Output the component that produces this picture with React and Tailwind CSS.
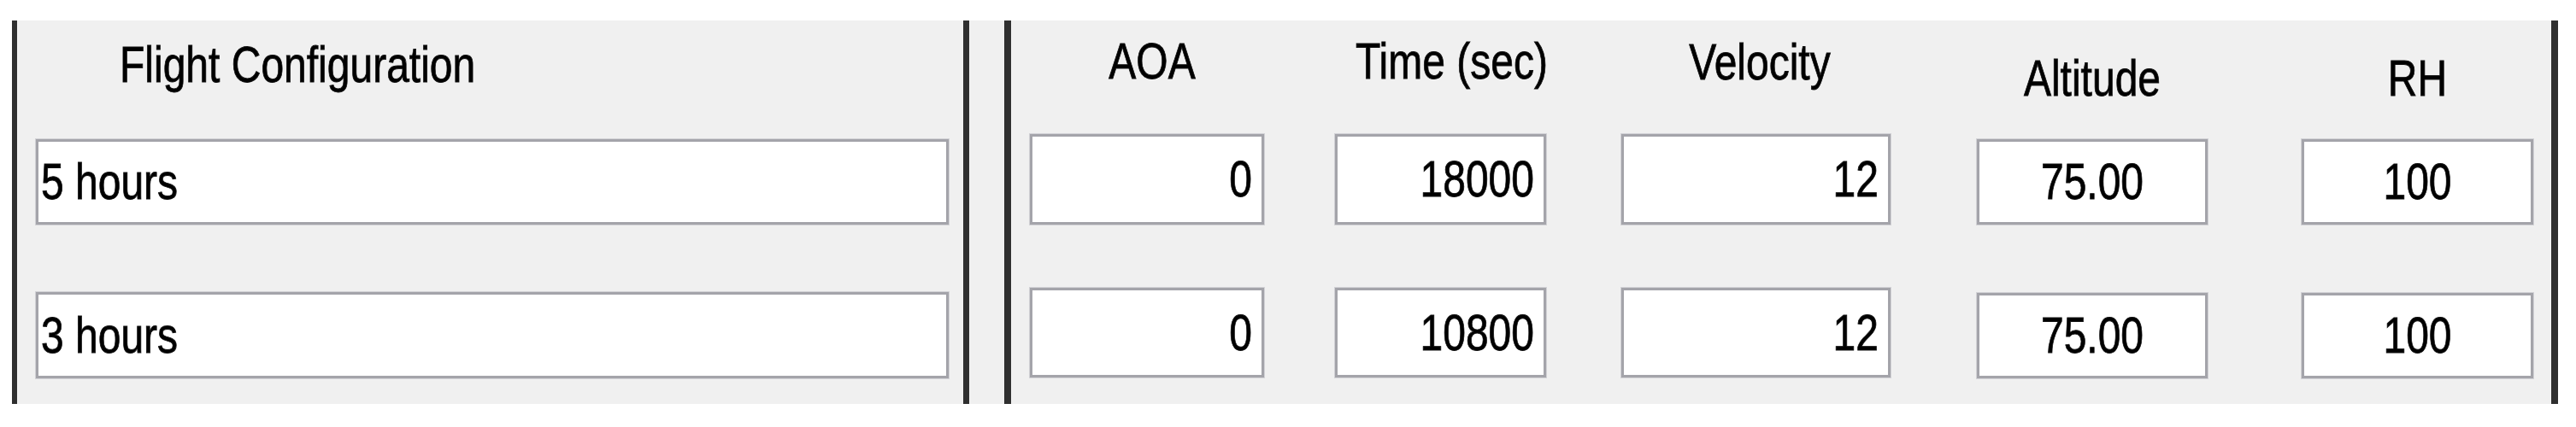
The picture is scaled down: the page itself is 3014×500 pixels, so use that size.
import * as React from 'react'
import { clsx } from 'clsx'

// one column per flight parameter; offsets taken from the dialog's layout
const columns = [
  {
    label: 'AOA',
    gap: 'ml-[22px]',
    width: 'w-[274px]',
    head: 'h-[133px] pt-[24px] pl-[12px]',
    tall: true,
    align: 'right',
    values: ['0', '0'],
  },
  {
    label: 'Time (sec)',
    gap: 'ml-[83px]',
    width: 'w-[247px]',
    head: 'h-[133px] pt-[24px] pl-[24px]',
    tall: true,
    align: 'right',
    values: ['18000', '10800'],
  },
  {
    label: 'Velocity',
    gap: 'ml-[88px]',
    width: 'w-[315px]',
    head: 'h-[133px] pt-[25px] pl-[9px]',
    tall: true,
    align: 'right',
    values: ['12', '12'],
  },
  {
    label: 'Altitude',
    gap: 'ml-[101px]',
    width: 'w-[270px]',
    head: 'h-[139px] pt-[44px]',
    tall: false,
    align: 'center',
    values: ['75.00', '75.00'],
  },
  {
    label: 'RH',
    gap: 'ml-[110px]',
    width: 'w-[271px]',
    head: 'h-[139px] pt-[44px]',
    tall: false,
    align: 'center',
    values: ['100', '100'],
  },
]

const configs = ['5 hours', '3 hours']

function Text({ children }) {
  return (
    <span className="inline-block text-[48px] leading-none whitespace-nowrap scale-y-[1.22] [-webkit-text-stroke:0.7px_#111]">
      {children}
    </span>
  )
}

function Field({ value, align = 'left', className }) {
  return (
    <div
      className={clsx(
        'flex items-center bg-white border-[3px] border-[#a4a4aa] shadow-[0_0_0_1px_#d2d2d6] text-black',
        align === 'left' && 'justify-start pl-[3px]',
        align === 'right' && 'justify-end pr-[11px]',
        align === 'center' && 'justify-center',
        className
      )}
    >
      <Text>{value}</Text>
    </div>
  )
}

export default function App() {
  return (
    <div className="bg-white pt-[24px] w-[3014px] h-[500px] font-['Liberation_Sans',Arial,sans-serif] text-black">
      <div className="flex h-[449px]">
        <div className="bg-white w-[14px]" />

        {/* flight configuration panel */}
        <div className="flex flex-col bg-[#f0f0f0] border-[#2f2f2f] border-r-[7px] border-l-[6px] w-[1120px]">
          <div className="pt-[28px] pl-[120px] h-[139px]">
            <Text>Flight Configuration</Text>
          </div>
          <Field value={configs[0]} className="ml-[22px] w-[1068px] h-[100px]" />
          <Field value={configs[1]} className="mt-[79px] ml-[22px] w-[1068px] h-[101px]" />
        </div>

        <div className="bg-[#f0f0f0] w-[41px]" />

        {/* parameters panel */}
        <div className="flex bg-[#f0f0f0] border-[#2f2f2f] border-x-[8px] w-[1818px]">
          {columns.map((c) => (
            <div key={c.label} className={clsx('flex flex-col', c.gap, c.width)}>
              <div className={clsx('text-center', c.head)}>
                <Text>{c.label}</Text>
              </div>
              <Field
                value={c.values[0]}
                align={c.align}
                className={c.tall ? 'h-[106px]' : 'h-[100px]'}
              />
              <Field
                value={c.values[1]}
                align={c.align}
                className={c.tall ? 'mt-[74px] h-[105px]' : 'mt-[80px] h-[100px]'}
              />
            </div>
          ))}
        </div>

        <div className="flex-1 bg-white" />
      </div>
    </div>
  )
}
